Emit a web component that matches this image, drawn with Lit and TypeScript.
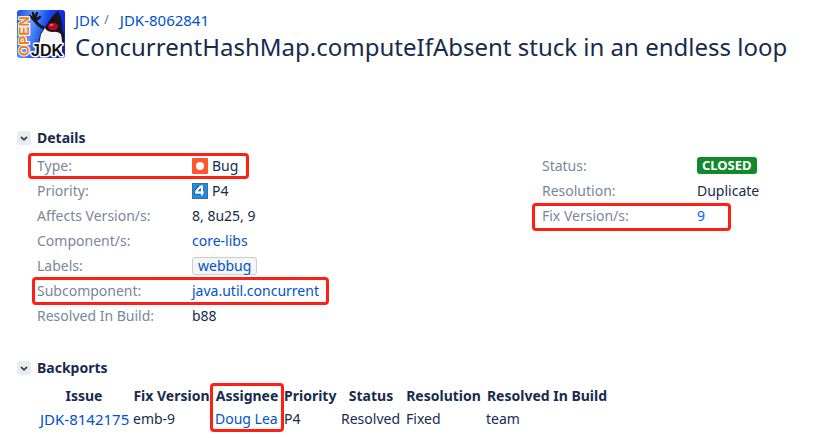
import { LitElement, html, css, nothing, type TemplateResult } from "lit";
import { customElement, property } from "lit/decorators.js";

const projectLogo = html`<svg class="logo" viewBox="0 0 48 48" role="img" aria-label="OpenJDK">
  <defs>
    <linearGradient id="sky" x1="0" y1="0" x2="1" y2="0.3">
      <stop offset="0" stop-color="#1c4fe0" />
      <stop offset="0.35" stop-color="#5b9afb" />
      <stop offset="0.65" stop-color="#1546f0" />
      <stop offset="1" stop-color="#0a22e8" />
    </linearGradient>
    <clipPath id="tile"><rect width="48" height="48" rx="3" /></clipPath>
  </defs>
  <g clip-path="url(#tile)">
    <rect width="48" height="48" fill="url(#sky)" />
    <path d="M44 20Q48 26 45 34" fill="none" stroke="#111" stroke-width="2" />
    <path d="M28 17Q22 24 22 32V46H45Q47 30 43 18Z" fill="#f6f6f8" stroke="#16161c" />
    <path d="M18 10Q20 15 27 18" fill="none" stroke="#161619" stroke-width="3" />
    <path d="M18 11L13 6M17 8L16 3M18 8L20 3M19 10L23 7" fill="none" stroke="#161619" stroke-width="2.400" stroke-linecap="round" />
    <circle cx="18" cy="9" r="2.500" fill="#161619" />
    <path d="M41 1Q34 6 28 18Q30 22 36 22Q41 21 45 25Q46 9 41 1Z" fill="#161619" />
    <ellipse cx="36" cy="16.500" rx="5.500" ry="4.500" fill="#a80d29" stroke="#31050c" />
    <ellipse cx="34.500" cy="15" rx="2" ry="1" fill="#e26b79" />
    <text class="open" transform="translate(12 46) rotate(-90)">OPEN</text>
    <text class="jdk" x="14" y="46">JDK</text>
  </g>
</svg>`;

const bugIcon = html`<svg class="icon" viewBox="0 0 16 16" aria-hidden="true">
  <rect width="16" height="16" rx="1" fill="#ff5630" />
  <circle cx="8" cy="8" r="4" fill="#fff" />
</svg>`;

const priorityIcon = html`<svg class="icon" viewBox="0 0 16 16" aria-hidden="true">
  <rect x="0.5" y="0.5" width="15" height="15" fill="#0c94fa" stroke="#5b666f" />
  <path d="M8 3.500L4 8.500V9.500H11.500M10 3.500V12.500" fill="none" stroke="#17466f" stroke-width="4.200" stroke-linejoin="round" />
  <path d="M8.500 3.500L4 8.500V9.500H11.800M8.500 3.500H10V12.500" fill="none" stroke="#fff" stroke-width="2.400" stroke-linejoin="round" />
</svg>`;

@customElement("toggle-heading")
export class ToggleHeading extends LitElement {
  @property() label = "";

  static styles = css`
    :host { display: block; }
    h2 { display: flex; align-items: center; gap: 6px; margin: 0; font-size: 14px; line-height: 20px; font-weight: 700; }
    button { width: 14px; height: 14px; padding: 0; border: 0; border-radius: 3px; background: #ebecf0; color: #344563; display: flex; }
    svg { width: 14px; height: 14px; }
  `;

  render() {
    return html`<h2>
      <button aria-label="Toggle ${this.label}">
        <svg viewBox="0 0 14 14"><path d="M4 6L7 8.800L10 6" fill="none" stroke="currentColor" stroke-width="1.800" /></svg>
      </button>${this.label}
    </h2>`;
  }
}

interface Field {
  label: string;
  value: TemplateResult | string;
  mark?: string;
}

const leftFields: Field[] = [
  { label: "Type:", value: html`${bugIcon}Bug`, mark: "mark-type" },
  { label: "Priority:", value: html`${priorityIcon}P4` },
  { label: "Affects Version/s:", value: "8, 8u25, 9" },
  { label: "Component/s:", value: html`<a href="#core-libs">core-libs</a>` },
  { label: "Labels:", value: html`<a class="tag" href="#webbug">webbug</a>` },
  { label: "Subcomponent:", value: html`<a href="#concurrent">java.util.concurrent</a>`, mark: "mark-sub" },
  { label: "Resolved In Build:", value: "b88" },
];

const rightFields: Field[] = [
  { label: "Status:", value: html`<span class="status">CLOSED</span>` },
  { label: "Resolution:", value: "Duplicate" },
  { label: "Fix Version/s:", value: html`<a class="bright" href="#9">9</a>`, mark: "mark-fix" },
];

@customElement("app-root")
export class AppRoot extends LitElement {
  static styles = css`
    :host {
      display: block;
      padding: 10px 0 4px 17px;
      background: #fff;
      color: #172b4d;
      font: 14px/20px "Noto Sans", "Open Sans", sans-serif;
    }
    a { color: #0052cc; text-decoration: none; }
    header { display: flex; gap: 10px; margin-bottom: 65px; }
    .logo { flex: none; width: 48px; height: 48px; }
    .open { font: 700 14px "Liberation Sans", sans-serif; fill: #f47b14; stroke: #fff; stroke-width: 2px; paint-order: stroke; }
    .jdk { font: 700 16px "Liberation Sans", sans-serif; fill: #111; stroke: #fff; stroke-width: 3px; stroke-linejoin: round; paint-order: stroke; }
    nav { display: flex; gap: 5px; }
    .slash { color: #5e6c84; font-size: 12px; margin-right: 6px; }
    .key { font-size: 15px; }
    h1 { margin: 1px 0 0; font-size: 24px; line-height: 32px; font-weight: 400; }
    .fields { display: grid; grid-template-columns: 64% 1fr; padding-left: 20px; margin: 5px 0 30px; align-items: start; }
    dl { margin: 0; }
    .row { position: relative; display: flex; height: 25px; align-items: center; }
    dt { width: 155px; flex: none; color: #7a869a; }
    dd { margin: 0; display: flex; align-items: center; gap: 4px; color: #172b4d; }
    .icon { width: 16px; height: 16px; }
    .tag { border: 1px solid #ccc; border-radius: 3px; background: #f5f5f5; padding: 0 5px; line-height: 16px; }
    .status { background: #14892c; color: #fff; border-radius: 3px; padding: 0 5px; font-size: 13px; line-height: 17px; font-weight: 700; }
    .bright { color: #0065ff; }
    .mark { position: absolute; box-sizing: border-box; border: 3px solid #ff2015; border-radius: 4px; pointer-events: none; }
    .mark-type { left: -9px; top: 0; width: 221px; height: 26px; }
    .mark-sub { left: -5px; top: -1px; width: 297px; height: 28px; }
    .mark-fix { left: -10px; top: 0; width: 199px; height: 28px; }
    .mark-assignee { left: -5px; top: -1px; width: 74px; height: 49px; }
    table { margin: 6px 0 0 23px; border-spacing: 0; table-layout: fixed; width: 568px; }
    th, td { box-sizing: border-box; padding: 0; line-height: 24px; white-space: nowrap; text-align: left; }
    th { text-align: center; padding-right: 5px; font-weight: 700; }
    th:last-child { padding-right: 0; }
    td { height: 24px; line-height: 22px; vertical-align: top; }
    .anchor { position: relative; }
    .w-issue { width: 93px; }
    .w-fix { width: 82px; }
    .w-assignee { width: 69px; }
    .w-priority { width: 57px; }
    .w-status { width: 65px; }
    .w-resolution { width: 80px; }
    .w-build { width: 122px; }
  `;

  private fieldList(fields: Field[]) {
    return html`<dl>${fields.map(
      (f) => html`<div class="row">
        <dt>${f.label}</dt><dd>${f.value}</dd>
        ${f.mark ? html`<span class="mark ${f.mark}"></span>` : nothing}
      </div>`
    )}</dl>`;
  }

  render() {
    return html`
      <header>
        ${projectLogo}
        <div>
          <nav><a class="key" href="#jdk">JDK</a><span class="slash">/</span><a class="key" href="#issue">JDK-8062841</a></nav>
          <h1>ConcurrentHashMap.computeIfAbsent stuck in an endless loop</h1>
        </div>
      </header>
      <section>
        <toggle-heading label="Details"></toggle-heading>
        <div class="fields">${this.fieldList(leftFields)}${this.fieldList(rightFields)}</div>
      </section>
      <section>
        <toggle-heading label="Backports"></toggle-heading>
        <table>
          <thead><tr>
            <th class="w-issue">Issue</th>
            <th class="w-fix">Fix Version</th>
            <th class="w-assignee anchor">Assignee<span class="mark mark-assignee"></span></th>
            <th class="w-priority">Priority</th>
            <th class="w-status">Status</th>
            <th class="w-resolution">Resolution</th>
            <th class="w-build">Resolved In Build</th>
          </tr></thead>
          <tbody><tr>
            <td><a class="key" href="#JDK-8142175">JDK-8142175</a></td>
            <td>emb-9</td>
            <td><a href="#dl">Doug Lea</a></td>
            <td>P4</td>
            <td>Resolved</td>
            <td>Fixed</td>
            <td>team</td>
          </tr></tbody>
        </table>
      </section>
    `;
  }
}
